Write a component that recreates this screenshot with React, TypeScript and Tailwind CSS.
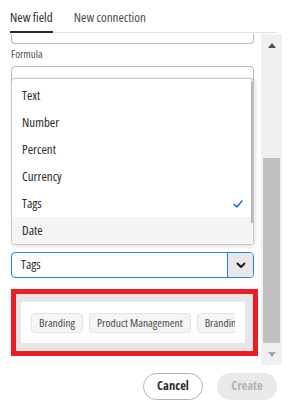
function Check() {
  return (
    <svg width="10" height="8" viewBox="0 0 10 8" fill="none">
      <path d="M1 4.2 L3.8 7 L9 1" stroke="#1473e6" strokeWidth="1.6" strokeLinecap="round" strokeLinejoin="round" />
    </svg>
  );
}

function Chevron() {
  return (
    <svg width="10" height="7" viewBox="0 0 10 7" fill="none">
      <path d="M1.5 1.5 L5 5 L8.5 1.5" stroke="#1b1b1b" strokeWidth="2" strokeLinecap="round" strokeLinejoin="round" />
    </svg>
  );
}

function Chip({ label }: { label: string }) {
  return (
    <div className="shrink-0 h-[20px] px-[7px] flex items-center rounded-[4px] border border-[#e3e3e3] bg-[#f5f5f5] text-[11.5px] text-[#4b4b4b] whitespace-nowrap">
      {label}
    </div>
  );
}

export default function App() {
  const items = ["Text", "Number", "Percent", "Currency", "Tags", "Date"];
  return (
    <div className="relative w-[291px] h-[408px] bg-white overflow-hidden font-['Open_Sans',sans-serif] [font-stretch:85%] text-[#2c2c2c]">
      {/* Tabs */}
      <div className="pl-[10px] pr-[14px] h-[34px]">
        <div className="h-[33px] border-b border-[#e1e1e1] flex items-stretch gap-[21px] text-[13px]">
          <div className="relative flex items-center pt-[4px] text-[#2c2c2c]">
            New field
            <div className="absolute left-0 right-0 bottom-[-1px] h-[2px] bg-[#2c2c2c]" />
          </div>
          <div className="flex items-center pt-[4px] text-[#4b4b4b]">New connection</div>
        </div>
      </div>

      {/* Body */}
      <div className="flex h-[331px] w-[282px]">
        <div className="w-[261px] overflow-hidden flex flex-col">
          <div className="ml-[11px] w-[243px] h-[10px] shrink-0 border-x border-b border-[#b8b8b8] rounded-b-[4px]" />
          <div className="ml-[11px] mt-[2px] h-[16px] leading-[16px] text-[11px] text-[#505050]">Formula</div>
          <div className="ml-[11px] mt-[4px] w-[243px] h-[32px] shrink-0 border border-[#b8b8b8] rounded-[4px]" />
          <div className="ml-[11px] mt-[154px] w-[243px] h-[26px] shrink-0 border border-[#2680eb] rounded-[4px] flex overflow-hidden">
            <div className="flex-1 flex items-center pl-[9px] text-[13px] text-[#2c2c2c]">Tags</div>
            <div className="w-[26px] border-l border-[#2680eb] bg-[#e8e8e8] flex items-center justify-center">
              <Chevron />
            </div>
          </div>
          <div className="ml-[11px] mt-[11px] w-[247px] h-[67px] shrink-0 border-[5px] border-[#ed1c24] bg-[#e6e6e6] pl-[5px] pr-[8px] py-[8px]">
            <div className="h-full bg-white px-[10px] flex items-center">
              <div className="flex gap-[6px] overflow-hidden w-full">
                <Chip label="Branding" />
                <Chip label="Product Management" />
                <Chip label="Branding" />
              </div>
            </div>
          </div>
        </div>
        {/* Scrollbar */}
        <div className="w-[21px] bg-[#f0f0f0] flex flex-col items-center">
          <div className="h-[22px] w-full flex items-center justify-center">
            <div className="w-0 h-0 border-x-[4.5px] border-x-transparent border-b-[5px] border-b-[#505050]" />
          </div>
          <div className="flex-1 w-full flex flex-col px-[2px]">
            <div className="mt-auto h-[185px] bg-[#c1c1c1]" />
          </div>
          <div className="h-[22px] w-full flex items-center justify-center">
            <div className="w-0 h-0 border-x-[4.5px] border-x-transparent border-t-[5px] border-t-[#a3a3a3]" />
          </div>
        </div>
      </div>

      {/* Footer */}
      <div className="mt-[8px] pr-[14px] flex justify-end gap-[14px]">
        <button className="w-[60px] h-[27px] rounded-full border border-[#b3b3b3] bg-white text-[12.5px] font-bold text-[#2c2c2c] flex items-center justify-center">
          Cancel
        </button>
        <button className="w-[60px] h-[27px] rounded-full bg-[#e9e9e9] text-[12.5px] font-bold text-[#b3b3b3] flex items-center justify-center">
          Create
        </button>
      </div>

      {/* Popup menu */}
      <div className="absolute left-[11px] top-[78px] w-[243px] h-[167px] bg-white border border-[#c8c8c8] rounded-[4px] shadow-[1px_1px_4px_rgba(0,0,0,0.15)] pt-[3px] overflow-hidden">
        {items.map((it) => (
          <div
            key={it}
            className={
              "h-[27px] pl-[10px] pr-[10px] flex items-center justify-between text-[13px] text-[#2c2c2c] " +
              (it === "Date" ? "bg-[#f4f4f4]" : "")
            }
          >
            <span>{it}</span>
            {it === "Tags" ? <Check /> : null}
          </div>
        ))}
        <div className="absolute right-0 top-[2px] w-[2px] h-[142px] bg-[#b5b5b5] rounded-full" />
      </div>
    </div>
  );
}
